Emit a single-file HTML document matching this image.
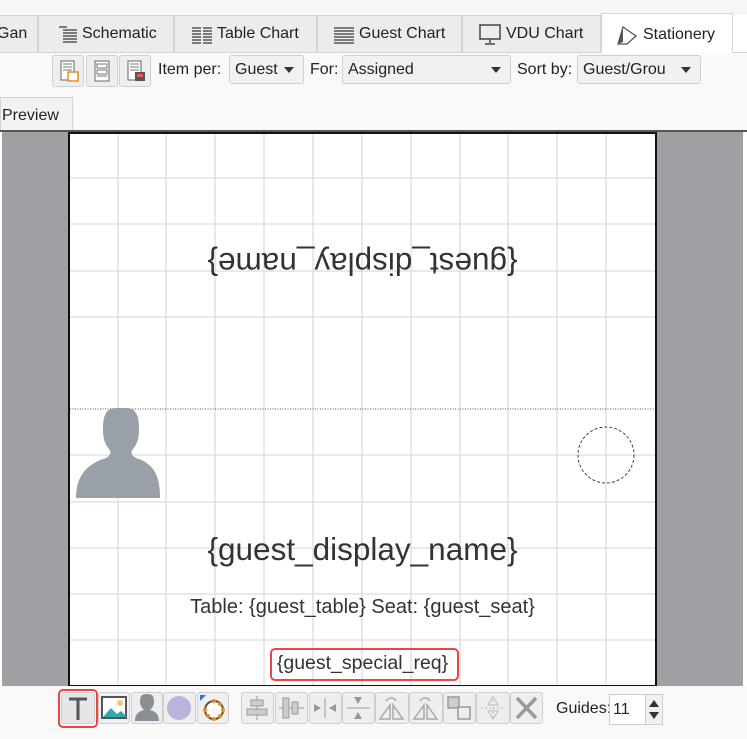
<!DOCTYPE html>
<html><head><meta charset="utf-8"><style>
*{margin:0;padding:0;box-sizing:border-box}
body{width:747px;height:739px;overflow:hidden;background:#fff;font-family:"Liberation Sans",sans-serif;position:relative;color:#222}
.a{position:absolute}
.tab{position:absolute;top:15px;height:37px;background:#ececec;border:1px solid #d4d4d4;border-bottom:none;font-size:16px;line-height:36px;color:#222;white-space:nowrap}
.tab span.tx{position:absolute;top:0}
.tab svg{position:absolute;top:8px}
.btn{position:absolute;background:#eeeeee;border:1px solid #cfcfcf;border-radius:3px}
.sel{position:absolute;top:55px;height:29px;background:#f1f1f1;border:1px solid #cfcfcf;border-radius:3px;font-size:16px;line-height:27px;padding-left:5px;white-space:nowrap;overflow:hidden}
.sel:after{content:"";position:absolute;right:9px;top:11px;border:5px solid transparent;border-top:6px solid #333;border-bottom:none}
.lbl{position:absolute;top:55px;font-size:16px;line-height:29px}
.t{position:absolute;left:70px;width:585px;text-align:center;color:#333;font-family:"Liberation Sans",sans-serif;white-space:nowrap}
</style></head><body>
<div class="a" style="left:0;top:0;width:747px;height:15px;background:#f6f6f6"></div>
<div class="a" style="left:0;top:52px;width:747px;height:1px;background:#d4d4d4"></div>
<div class="tab" style="left:-8px;width:46px"><span class="tx" style="left:4px">Gan</span></div>
<div class="tab" style="left:38px;width:136px"><svg style="left:18px" width="22" height="22"><path d="M2 3h8M6 6h14M6 9h14M6 12h14M6 15h14M6 18h14" stroke="#555" stroke-width="1.5"/></svg><span class="tx" style="left:43px">Schematic</span></div>
<div class="tab" style="left:174px;width:143px"><svg style="left:16px" width="22" height="22"><path d="M1 4h9M12 4h9M1 7h9M12 7h9M1 10h9M12 10h9M1 13h9M12 13h9M1 16h9M12 16h9M1 19h9M12 19h9" stroke="#555" stroke-width="1.5"/></svg><span class="tx" style="left:42px">Table Chart</span></div>
<div class="tab" style="left:317px;width:145px"><svg style="left:15px" width="22" height="22"><path d="M1 4h20M1 7h20M1 10h20M1 13h20M1 16h20M1 19h20" stroke="#555" stroke-width="1.5"/></svg><span class="tx" style="left:41px">Guest Chart</span></div>
<div class="tab" style="left:462px;width:139px"><svg style="left:16px" width="22" height="22" viewBox="0 0 22 22"><rect x="1" y="1" width="20" height="14" fill="none" stroke="#444" stroke-width="1.5"/><path d="M11 15v4M6 20h10" stroke="#444" stroke-width="1.5"/></svg><span class="tx" style="left:43px">VDU Chart</span></div>
<div class="tab" style="left:601px;top:13px;height:40px;width:132px;background:#fff;line-height:42px"><svg style="left:14px;top:10px" width="22" height="22" viewBox="0 0 22 22"><path d="M2 20L7 3l13 9-9 8z" fill="none" stroke="#555" stroke-width="1.3"/><path d="M2 20L7 3v15z" fill="#555"/></svg><span class="tx" style="left:41px">Stationery</span></div>
<div class="a" style="left:0;top:53px;width:747px;height:77px;background:#f9f9f9"></div>
<div class="btn" style="left:52px;top:55px;width:32px;height:32px"><svg width="30" height="30"><rect x="8" y="5" width="13" height="19" fill="#fff" stroke="#666"/><path d="M10 8h9M10 11h9M10 14h9" stroke="#777"/><rect x="15" y="16" width="10" height="9" fill="#fff" stroke="#e98c1c" stroke-width="1.5"/></svg></div>
<div class="btn" style="left:86px;top:55px;width:32px;height:32px"><svg width="30" height="30"><rect x="8" y="5" width="14" height="20" fill="#fff" stroke="#666"/><path d="M10 8h10v4H10zM10 14h10v4H10zM10 20h10" fill="none" stroke="#777"/></svg></div>
<div class="btn" style="left:119px;top:55px;width:32px;height:32px"><svg width="30" height="30"><rect x="8" y="5" width="13" height="19" fill="#fff" stroke="#666"/><path d="M10 8h9M10 11h9M10 14h9" stroke="#777"/><rect x="15" y="16" width="10" height="9" fill="#555"/><rect x="17" y="18" width="6" height="3" fill="#e55"/></svg></div>
<div class="lbl" style="left:158px">Item per:</div>
<div class="sel" style="left:229px;width:75px">Guest</div>
<div class="lbl" style="left:310px">For:</div>
<div class="sel" style="left:342px;width:169px">Assigned</div>
<div class="lbl" style="left:517px">Sort by:</div>
<div class="sel" style="left:577px;width:124px">Guest/Grou</div>
<div class="a" style="left:0;top:97px;width:73px;height:34px;background:#f2f2f2;border:1px solid #d4d4d4;border-bottom:none;font-size:16px;line-height:36px;padding-left:1px">Preview</div>
<div class="a" style="left:0;top:130px;width:747px;height:2px;background:#555"></div>
<div class="a" style="left:2px;top:132px;width:741px;height:554px;background:#a09fa4"></div>
<svg class="a" style="left:68px;top:132px" width="589" height="555">
<rect x="1" y="1" width="587" height="553" fill="#fff" stroke="#111" stroke-width="2"/>
<g stroke="#dcdcdc" stroke-width="1.3">
<path d="M50 2v551M98 2v551M147 2v551M196 2v551M245 2v551M294 2v551M343 2v551M392 2v551M440 2v551M489 2v551M538 2v551"/>
<path d="M2 46h585M2 92h585M2 139h585M2 185h585M2 323h585M2 370h585M2 416h585M2 462h585M2 508h585"/>
</g>
<path d="M2 277h585" stroke="#555" stroke-dasharray="1 1.5"/>
<circle cx="538" cy="323" r="28" fill="none" stroke="#444" stroke-dasharray="3 2"/>
<path d="M8 366c0-25 14-35 30-40 4-2 6-5 3-9-5-6-6-12-6-20 0-15 4-21 13-21h10c9 0 13 6 13 21 0 8-1 14-6 20-3 4-1 7 3 9 16 5 24 15 24 40z" fill="#9aa0a8"/>
</svg>
<div class="t" style="top:245px;font-size:31.5px;line-height:38px;transform:rotate(180deg)">{guest_display_name}</div>
<div class="t" style="top:530px;font-size:31.5px;line-height:38px">{guest_display_name}</div>
<div class="t" style="top:595px;font-size:20px;line-height:24px">Table: {guest_table} Seat: {guest_seat}</div>
<div class="t" style="top:651px;font-size:19.5px;line-height:24px">{guest_special_req}</div>
<div class="a" style="left:270px;top:648px;width:189px;height:33px;border:2px solid #e44;border-radius:5px"></div>
<div class="a" style="left:0;top:686px;width:747px;height:53px;background:#f9f9f9"></div>
<div class="btn" style="left:61px;top:692px;width:34px;height:32px;background:#e6e6e6"><svg width="32" height="30"><path d="M7 6h18M16 6v21" stroke="#555" stroke-width="3"/></svg></div>
<div class="a" style="left:58px;top:689px;width:40px;height:39px;border:2px solid #e44;border-radius:5px"></div>
<div class="btn" style="left:98px;top:692px;width:32px;height:32px"><svg width="30" height="30"><rect x="3" y="4" width="24" height="21" fill="#fff" stroke="#555" stroke-width="2"/><path d="M4 24l8-9 6 6 4-3 5 5v1z" fill="#2aa8b8"/><circle cx="21" cy="10" r="3" fill="#ec6"/></svg></div>
<div class="btn" style="left:131px;top:692px;width:32px;height:32px"><svg width="30" height="30"><path d="M3 28c0-8 5-10 9-11-3-3-4-5-4-9 0-5 2-7 7-7s7 2 7 7c0 4-1 6-4 9 4 1 9 3 9 11z" fill="#8a8f96"/></svg></div>
<div class="btn" style="left:163px;top:692px;width:33px;height:32px"><svg width="31" height="30"><circle cx="15" cy="15" r="12" fill="#b8b4dc"/></svg></div>
<div class="btn" style="left:197px;top:692px;width:32px;height:32px"><svg width="30" height="30"><circle cx="16" cy="17" r="9" fill="#fff" stroke="#555" stroke-width="2"/><g fill="#e98c1c"><circle cx="16" cy="8" r="2"/><circle cx="25" cy="17" r="2"/><circle cx="16" cy="26" r="2"/><circle cx="7" cy="17" r="2"/><circle cx="22" cy="11" r="2"/><circle cx="22" cy="23" r="2"/><circle cx="10" cy="23" r="2"/></g><path d="M2 2h6L2 8z" fill="#2277dd"/></svg></div>
<div class="btn" style="left:241px;top:692px;width:33px;height:32px"><svg width="31" height="30" stroke="#999" fill="#ccc"><path d="M15 3v24" /><rect x="9" y="7" width="12" height="6"/><rect x="5" y="16" width="20" height="6"/></svg></div>
<div class="btn" style="left:275px;top:692px;width:33px;height:32px"><svg width="31" height="30" stroke="#999" fill="#ccc"><path d="M3 15h25"/><rect x="7" y="5" width="6" height="20"/><rect x="16" y="9" width="6" height="12"/></svg></div>
<div class="btn" style="left:309px;top:692px;width:33px;height:32px"><svg width="31" height="30" fill="#999"><path d="M15 5v20" stroke="#999"/><path d="M4 11v8l7-4zM26 11v8l-7-4z"/></svg></div>
<div class="btn" style="left:342px;top:692px;width:33px;height:32px"><svg width="31" height="30" fill="#999"><path d="M4 15h23" stroke="#999"/><path d="M11 4h8l-4 7zM11 26h8l-4-7z"/></svg></div>
<div class="btn" style="left:375px;top:692px;width:34px;height:32px"><svg width="32" height="30" fill="none" stroke="#aaa" stroke-width="1.5"><path d="M14 26H4l10-14zM17 26h10L17 12zM10 8c3-4 8-4 10 0"/></svg></div>
<div class="btn" style="left:409px;top:692px;width:34px;height:32px"><svg width="32" height="30" fill="none" stroke="#aaa" stroke-width="1.5"><path d="M14 26H4l10-14zM17 26h10L17 12zM10 8c3-4 8-4 10 0"/></svg></div>
<div class="btn" style="left:443px;top:692px;width:33px;height:32px"><svg width="31" height="30" fill="#ccc" stroke="#999" stroke-width="1.5"><rect x="4" y="4" width="11" height="11"/><rect x="14" y="14" width="12" height="12" fill="#eee"/></svg></div>
<div class="btn" style="left:476px;top:692px;width:34px;height:32px"><svg width="32" height="30" fill="none" stroke="#bbb"><path d="M16 3v24M4 15h24" stroke-dasharray="2 2"/><path d="M11 12l5-8 5 8zM11 18l5 8 5-8z"/></svg></div>
<div class="btn" style="left:510px;top:692px;width:33px;height:32px"><svg width="31" height="30"><path d="M6 5l19 20M25 5L6 25" stroke="#999" stroke-width="3.5"/></svg></div>
<div class="a" style="left:556px;top:697px;font-size:16px;line-height:24px">Guides:</div>
<div class="a" style="left:609px;top:694px;width:37px;height:31px;background:#fff;border:1px solid #ccc;font-size:16px;line-height:29px;padding-left:3px">11</div>
<div class="a" style="left:645px;top:694px;width:18px;height:31px;background:#f0f0f0;border:1px solid #ccc"><svg width="16" height="29"><path d="M3 12l5-7 5 7zM3 17l5 7 5-7z" fill="#333"/></svg></div>
</body></html>
